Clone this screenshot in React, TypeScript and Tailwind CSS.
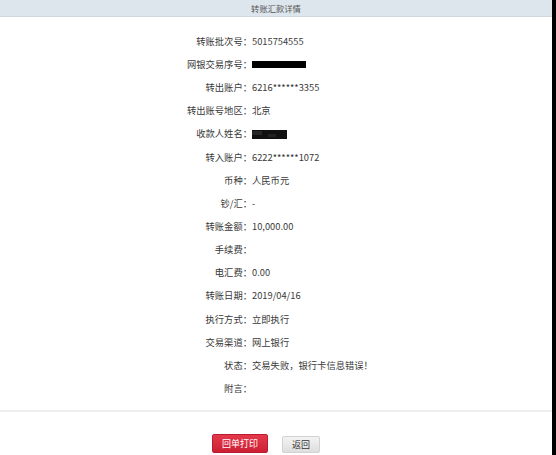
import React from "react";

const rows: { label: string; value?: string; box?: "a" | "b" }[] = [
  { label: "转账批次号：", value: "5015754555" },
  { label: "网银交易序号：", box: "a" },
  { label: "转出账户：", value: "6216******3355" },
  { label: "转出账号地区：", value: "北京" },
  { label: "收款人姓名：", box: "b" },
  { label: "转入账户：", value: "6222******1072" },
  { label: "币种：", value: "人民币元" },
  { label: "钞/汇：", value: "-" },
  { label: "转账金额：", value: "10,000.00" },
  { label: "手续费：", value: "" },
  { label: "电汇费：", value: "0.00" },
  { label: "转账日期：", value: "2019/04/16" },
  { label: "执行方式：", value: "立即执行" },
  { label: "交易渠道：", value: "网上银行" },
  { label: "状态：", value: "交易失败，银行卡信息错误！" },
  { label: "附言：", value: "" },
];

export default function App() {
  return (
    <div
      className="flex h-[455px] w-[556px] bg-white text-[#383838]"
      style={{ fontFamily: '"Noto Sans CJK SC", "Noto Sans", sans-serif' }}
    >
      <div className="flex w-[552px] flex-col">
        <div className="flex h-[17px] items-center justify-center border-b border-[#cfd7df] bg-[#dde5ed] text-[8.3px] text-[#555]">
          转账汇款详情
        </div>
        <div className="flex flex-col pt-[13px]">
          {rows.map((r) => (
            <div key={r.label} className="flex h-[23.15px] items-center text-[9.3px] leading-none">
              <div className="w-[252px] shrink-0 text-right">{r.label}</div>
              <div className="flex items-center">
                {r.box === "a" && <div className="h-[7px] w-[54px] bg-black" />}
                {r.box === "b" && (
                  <div className="flex h-[9px] w-[35px] bg-[#111]">
                    <div className="mt-[1px] h-[4px] w-[10px] bg-[#262626]" />
                    <div className="ml-[6px] mt-[4px] h-[3px] w-[8px] bg-[#222]" />
                  </div>
                )}
                {r.value !== undefined && <span>{r.value}</span>}
              </div>
            </div>
          ))}
        </div>
        <div className="mt-[10px] h-[2px] bg-[#eeeeee]" />
        <div className="flex items-end gap-[14px] pl-[212px] pt-[22px]">
          <div className="flex h-[19px] w-[56px] items-center justify-center rounded-[2px] border border-[#b91c2f] bg-gradient-to-b from-[#e4384c] to-[#cc1f33] text-[9px] text-white">
            回单打印
          </div>
          <div className="flex h-[17px] w-[38px] items-center justify-center rounded-[2px] border border-[#d2d2d2] bg-gradient-to-b from-[#f3f3f3] to-[#dedede] text-[9px] text-[#333]">
            返回
          </div>
        </div>
      </div>
      <div className="h-full w-[4px] bg-black" />
    </div>
  );
}
